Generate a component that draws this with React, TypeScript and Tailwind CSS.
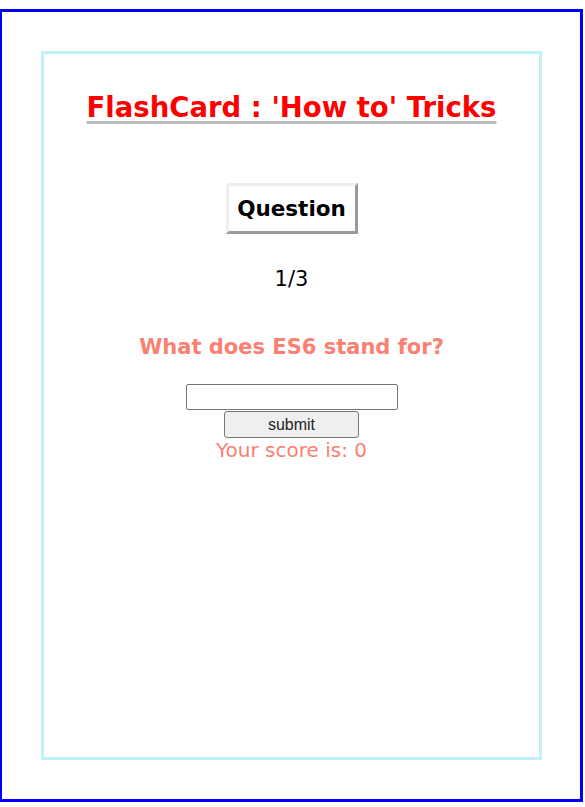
import { useState } from 'react';

const cards = [
    { q: 'What does ES6 stand for?', a: 'ECMAScript 6' },
    { q: 'How do you declare a constant?', a: 'const' },
    { q: 'What does JSX stand for?', a: 'JavaScript XML' },
];

export default function App() {
    const [index] = useState(0);
    const [answer, setAnswer] = useState('');
    const [score, setScore] = useState(0);

    const onSubmit = () => {
        if (answer.trim().toLowerCase() === cards[index].a.toLowerCase()) setScore(score + 1);
        setAnswer('');
    };

    return (
        <div className="mt-[9px] -ml-px w-[584px] h-[793px] border-[3px] border-[#0000ff] pt-[39px] pl-[39px] font-['DejaVu_Sans',sans-serif]">
            <div className="w-[501px] h-[709px] border-[3px] border-[#c0f2fb] flex flex-col items-center">
                <h1 className="mt-[34px] text-[27.5px] leading-[38px] font-bold text-[#ff0000] underline decoration-[#bdbdbd] decoration-[3px] underline-offset-[4px]">
                    FlashCard : 'How to' Tricks
                </h1>

                <div className="mt-[57px] w-[132px] h-[51px] border-[3px] border-t-[#eeeeee] border-l-[#eeeeee] border-r-[#9a9a9a] border-b-[#9a9a9a] flex items-center justify-center pt-[2px] text-[21.5px] font-bold text-black">
                    Question
                </div>

                <div className="mt-[33px] text-[21px] leading-[24px] text-black">
                    {index + 1}/{cards.length}
                </div>

                <h2 className="mt-[41px] text-[21px] leading-[30px] font-bold text-[#fa8072]">
                    {cards[index].q}
                </h2>

                <input
                    value={answer}
                    onChange={(e) => setAnswer(e.target.value)}
                    className="mt-[22px] w-[212px] h-[26px] border border-[#767676] rounded-[2px] bg-white px-1 outline-none"
                />
                <button
                    onClick={onSubmit}
                    className="mt-px w-[135px] h-[27px] border border-[#767676] rounded-[3px] bg-[#efefef] text-[16px] leading-none text-[#222] font-['Liberation_Sans',Arial,sans-serif]"
                >
                    submit
                </button>
                <div className="text-[20px] leading-[24px] text-[#fa8072]">
                    Your score is: {score}
                </div>
            </div>
        </div>
    );
}
